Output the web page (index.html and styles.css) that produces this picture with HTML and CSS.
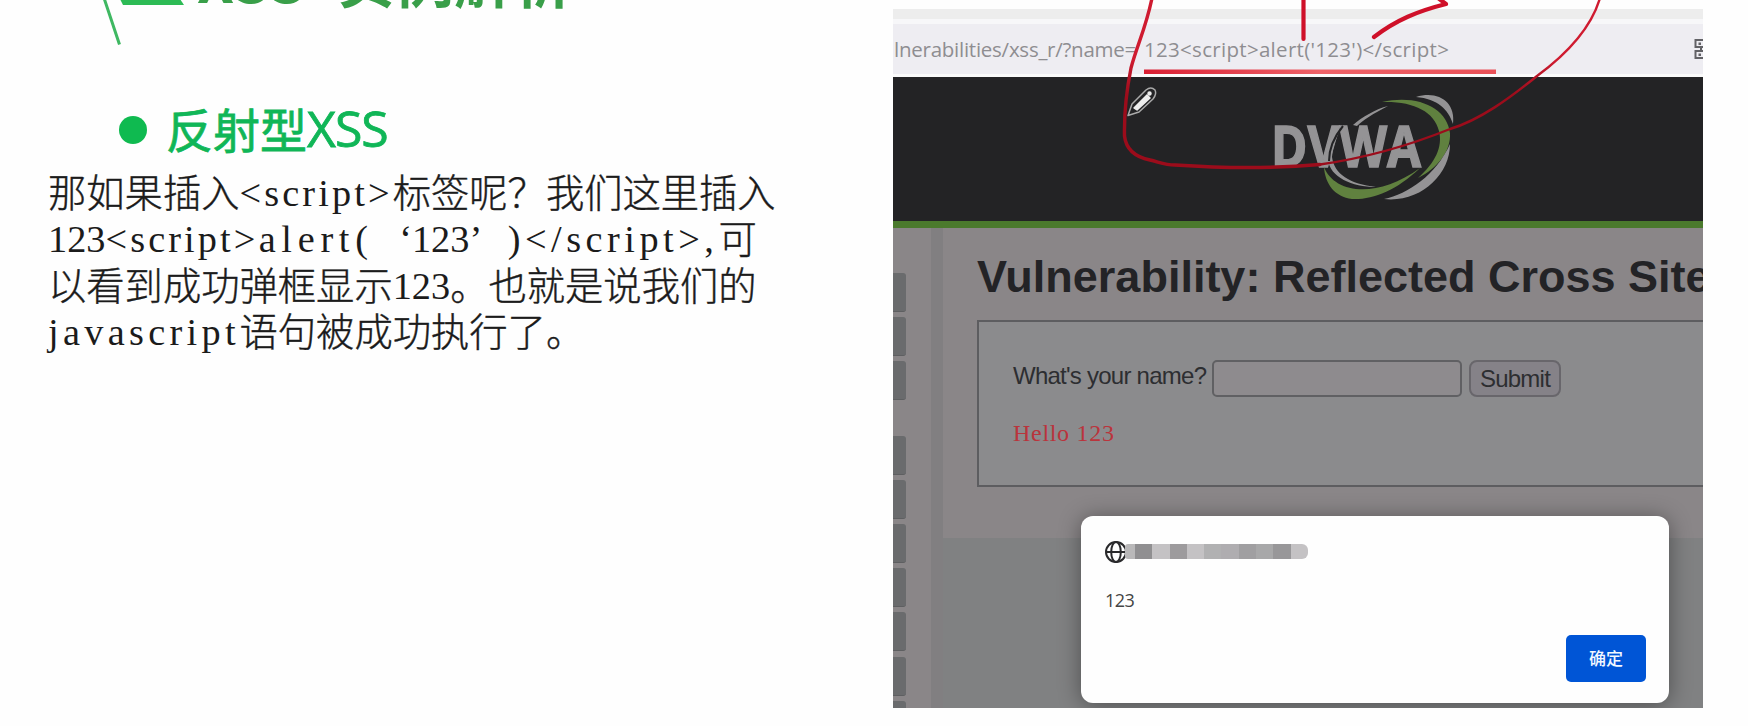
FILE: index.html
```html
<!DOCTYPE html>
<html lang="zh-CN">
<head>
<meta charset="utf-8">
<title>XSS 实例解析</title>
<link rel="stylesheet" href="styles.css">
</head>
<body>
<main class="slide">
  <section class="notes">
    <header class="slide-title">
      <svg class="title-mark" width="197" height="46" viewBox="0 0 197 46"><path d="M104-2L119.5 44.5" stroke="#3fb862" stroke-width="3"/><path d="M120-1H180L184 5H123Z" fill="#2dbb55"/></svg>
      <h1><span class="title-latin">XSS</span><span>实例解析</span></h1>
    </header>
    <h2><i class="dot"></i><span class="sub-cjk">反射型</span><span class="sub-latin">XSS</span></h2>
    <div class="copy">
      <p>那如果插入<b class="tag">&lt;script&gt;</b>标签呢？我们这里插入</p>
      <p><b>123</b><b class="tag">&lt;script&gt;</b><b class="call">alert(</b><b class="quote open">‘</b><b>123</b><b class="quote">’</b><b class="close">)&lt;/script&gt;,</b>可</p>
      <p>以看到成功弹框显示<b>123</b>。也就是说我们的</p>
      <p><b class="js">javascript</b>语句被成功执行了。</p>
    </div>
  </section>

  <section class="capture">
    <div class="tabstrip"></div>
    <div class="urlbar">
      <span class="url-path">lnerabilities/xss_r/?name=</span><span class="url-query">123&lt;script&gt;alert('123')&lt;/script&gt;</span>
      <svg class="qr" width="9" height="22" viewBox="0 0 9 22"><g fill="none" stroke="#626266" stroke-width="2"><path d="M9 2H1.500V9H9M9 13H1.500V20H9M7 9V13"/></g><path d="M4.500 4.500H7V7H4.500ZM4.500 15.500H7V18H4.500Z" fill="#626266"/></svg>
    </div>
    <div class="site-header">
      <svg class="logo" width="200" height="120" viewBox="1263 87 200 120">
        <text x="1271" y="167" textLength="150" lengthAdjust="spacingAndGlyphs">DVWA</text>
        <path d="M1353 125C1362 117 1376 109 1388 106C1374 113 1362 121 1357 126ZM1342 127Q1333 142 1332 157C1334 174 1350 184 1376 187C1352 187 1330 177 1328 160Q1330 141 1342 127Z" fill="#949395"/>
        <path d="M1343 126Q1329 143 1329 161" fill="none" stroke="#232325" stroke-width="2"/>
        <path d="M1382 102C1418 94 1447 108 1450 133C1451 151 1438 168 1418 178C1435 163 1443 147 1439 131C1434 111 1413 101 1382 102ZM1324 167C1334 193 1376 200 1420 168C1396 191 1372 200 1352 199C1335 197 1325 184 1324 167Z" fill="#60813f"/>
        <path d="M1416 97C1438 90 1456 102 1453 124C1448 109 1438 99 1416 97ZM1450 144C1450 175 1420 203 1384 199C1408 194 1436 175 1450 144Z" fill="#949395"/>
      </svg>
    </div>
    <div class="site-body">
      <nav class="menu"><i></i><i></i><i></i><i class="group"></i><i></i><i></i><i></i><i></i><i></i><i></i></nav>
      <div class="content">
        <h3>Vulnerability: Reflected Cross Site</h3>
        <div class="form-box">
          <div class="row"><label>What's your name?</label><span class="input"></span><span class="submit">Submit</span></div>
          <div class="hello">Hello 123</div>
        </div>
      </div>
    </div>
    <div class="dialog">
      <div class="origin">
        <svg width="22" height="24" viewBox="0 0 22 24"><g fill="none" stroke="#29292b" stroke-width="2"><circle cx="11" cy="12" r="10"/><ellipse cx="11" cy="12" rx="4.800" ry="10"/><path d="M1 12H21"/></g></svg>
        <span class="mosaic"><i></i><i></i><i></i><i></i><i></i><i></i><i></i><i></i><i></i><i></i><i></i></span>
      </div>
      <div class="message">123</div>
      <div class="ok">确定</div>
    </div>
  </section>

  <svg class="ink" width="1748" height="726" viewBox="0 0 1748 726">
    <defs>
      <linearGradient id="underline" x1="0" x2="1"><stop offset="0" stop-color="#d91f33"/><stop offset=".5" stop-color="#ee6268"/><stop offset="1" stop-color="#e95057"/></linearGradient>
      <linearGradient id="loop" gradientUnits="userSpaceOnUse" x1="0" y1="60" x2="0" y2="95"><stop offset="0" stop-color="#cf1b30"/><stop offset="1" stop-color="#9c0c1b"/></linearGradient>
    </defs>
    <g fill="none" stroke-linecap="round" stroke-linejoin="round">
      <path d="M1152-2C1146 28 1137 45 1131 68C1126 93 1124 112 1124.500 136C1126 149 1135 157 1150 160C1159 162 1165 165 1175 165C1220 168 1270 169 1320 164.500" stroke="url(#loop)" stroke-width="3.400"/>
      <path d="M1320 164.500C1365 158 1408 146 1450 129C1480 120 1510 98 1537 76C1575 48 1593 22 1600-2" stroke="url(#loop)" stroke-width="2.400"/>
      <path d="M1303.500-2V39M1374 37C1396 20 1418 11 1446 4L1438-2" stroke="#cf1029" stroke-width="4.200"/>
    </g>
    <rect x="1144" y="69.500" width="352" height="4.500" fill="url(#underline)"/>
    <g stroke="#aaa" stroke-width="1.500" fill="#232325" stroke-linejoin="round"><path d="M1128 115.500L1132 104L1146 90Q1151 86 1155 90Q1157 94 1153 99L1139 112Z"/><path d="M1134 108L1147 95L1150 98L1137 110Z" fill="#eee" stroke="#eee"/><circle cx="1149.500" cy="93.500" r="1.500" fill="#eee" stroke="#eee"/></g>
  </svg>
</main>
</body>
</html>
```
FILE: styles.css
```css
* { box-sizing: border-box; }
body { margin: 0; background: #fefefe; font-family: "Liberation Sans", "Noto Sans CJK SC", sans-serif; }
h1, h2, h3, p { margin: 0; font-weight: 400; }
i { font-style: normal; }
.slide { position: relative; display: flex; width: 1748px; height: 726px; overflow: hidden; }

.notes { width: 893px; flex: none; display: flex; flex-direction: column; }
.slide-title { display: flex; height: 46px; }
.title-mark { flex: none; }
.slide-title h1 { height: 64px; margin-top: -54px; display: flex; font: 700 59px/64px "Noto Sans CJK SC", sans-serif; color: #399f49; white-space: nowrap; }
.title-latin { width: 139px; }
.notes h2 { display: flex; align-items: center; height: 60px; margin-top: 52px; padding-left: 119px; color: #10b657; font: 400 47px/60px "Noto Sans CJK SC", sans-serif; -webkit-text-stroke: .8px #10b657; }
.dot { width: 28px; height: 28px; margin: 4px 19px 0 0; border-radius: 50%; background: #0fba50; }
.sub-cjk { width: 141px; }
.sub-latin { font-family: "Open Sans", sans-serif; font-size: 50px; letter-spacing: -1px; }
.copy { padding: 10px 0 0 48px; color: #1b1b1b; }
.copy p { display: flex; height: 46.300px; white-space: nowrap; font: 300 38.300px/46px "Noto Sans CJK SC", sans-serif; -webkit-text-stroke: .4px #1b1b1b; }
.copy b { padding-top: 4px; font: 400 38.300px/42px "Liberation Serif", serif; -webkit-text-stroke: 0; }
.copy .tag { width: 153.200px; letter-spacing: 3.100px; }
.copy .call { width: 115px; letter-spacing: 5.700px; }
.copy .quote { width: 38.300px; }
.copy .open { text-align: right; }
.copy .close { width: 210.700px; letter-spacing: 4.500px; }
.copy .js { width: 191.500px; letter-spacing: 4.300px; }

.capture { position: relative; width: 810px; height: 708px; flex: none; padding-top: 9px; overflow: hidden; display: flex; flex-direction: column; }
.tabstrip { flex: none; height: 15px; background: #ededed; border-bottom: 5px solid #f7f7f9; }
.urlbar { flex: none; height: 53px; display: flex; align-items: center; border-bottom: 3px solid #fafafa; background: #eeedf2; color: #8e8d91; font: 400 20.500px/50px "Open Sans", sans-serif; white-space: nowrap; padding-left: 1px; }
.url-path { width: 250px; letter-spacing: -.25px; }
.url-query { letter-spacing: .3px; }
.qr { margin-left: auto; }
.site-header { flex: none; height: 151px; background: #232325; border-bottom: 7px solid #4b7a2d; padding: 10px 0 0 370px; }
.logo { display: block; }
.logo text { font: 700 57px "Open Sans", sans-serif; fill: #949395; stroke: #949395; stroke-width: 1.500px; }
.site-body { flex: 1; min-height: 0; display: flex; background: #808182; overflow: hidden; }
.menu { width: 50px; padding-top: 45px; background: linear-gradient(90deg, #8a8688 38px, #817f81 38px); display: flex; flex-direction: column; gap: 5.200px; }
.menu i { flex: none; width: 13px; height: 39px; background: #6a6b6d; border-radius: 0 3px 3px 0; border-bottom: 1px solid #5e5f61; }
.menu .group { margin-top: 30px; }
.content { flex: 1; height: 310px; padding: 23px 0 0 34px; background: #8a8688; overflow: hidden; }
.content h3 { height: 69px; font: 700 45px/52px "Liberation Sans", sans-serif; color: #232326; white-space: nowrap; }
.form-box { height: 167px; border: 2px solid #5d5d60; border-right: 0; background: #8b8b8d; padding: 38px 0 0 34px; color: #2d2e31; font-size: 24px; }
.row { display: flex; height: 37px; line-height: 33px; white-space: nowrap; letter-spacing: -.75px; }
.row label { width: 199px; line-height: 31px; }
.input { width: 250px; border: 2px solid #606063; border-radius: 5px; background: #8e8b8e; }
.submit { width: 92px; margin-left: 7px; text-align: center; border: 2px solid #68666b; border-radius: 8px; background: #858288; }
.hello { margin-top: 20px; font: 400 24px/32px "Liberation Serif", serif; color: #ba343c; letter-spacing: .7px; }

.dialog { position: absolute; left: 188px; top: 516px; width: 588px; height: 187px; border-radius: 12px; background: #fefefe; box-shadow: 0 2px 22px #0006; padding: 24px 23px 21px 24px; display: flex; flex-direction: column; }
.origin { display: flex; height: 24px; align-items: center; }
.mosaic { display: flex; height: 15px; margin: 0 0 2px -2px; border-radius: 3px 6px 6px 3px; overflow: hidden; }
.mosaic i { width: 17.300px; background: #c4c2c4; }
.mosaic i:nth-child(1) { width: 10px; background: #b9b8b9; }
.mosaic i:nth-child(2) { background: #908f91; }
.mosaic i:nth-child(4) { background: #9d9b9d; }
.mosaic i:nth-child(6) { background: #b1b1b2; }
.mosaic i:nth-child(7) { background: #afadb0; }
.mosaic i:nth-child(8) { background: #a09fa1; }
.mosaic i:nth-child(9) { background: #a8a8a9; }
.mosaic i:nth-child(10) { background: #989799; }
.message { margin-top: 22px; font: 400 18px/28px "Open Sans", sans-serif; color: #444; letter-spacing: -.5px; }
.ok { width: 80px; height: 47px; margin: auto 0 0 auto; border-radius: 5px; background: #0055d6; color: #f2f8ff; font: 500 17px/46px "Noto Sans CJK SC", sans-serif; text-align: center; }
.ink { position: absolute; left: 0; top: 0; }
```
